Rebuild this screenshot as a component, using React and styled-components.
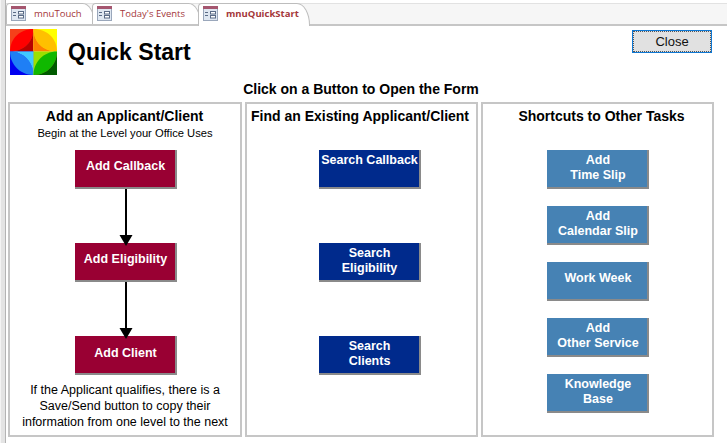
import styled, { createGlobalStyle } from "styled-components";

const GlobalStyle = createGlobalStyle`
  html, body {
    margin: 0;
    padding: 0;
    background: #fff;
  }
  body {
    font-family: "Liberation Sans", Arial, sans-serif;
    overflow: hidden;
  }
`;

const Page = styled.div`
  width: 727px;
  height: 443px;
  display: flex;
  overflow: hidden;
  background: #fff;
`;

const LeftEdge = styled.div`
  width: 6px;
  flex: none;
  box-sizing: border-box;
  background: #e4e4e4;
  border-left: 1px solid #f4f4f4;
  border-right: 1px solid #b4b4b4;
`;

const Main = styled.div`
  flex: 1;
  min-width: 0;
  display: flex;
  flex-direction: column;
`;

const TabStrip = styled.div`
  height: 23px;
  margin-top: 3px;
  box-sizing: border-box;
  display: flex;
  align-items: flex-end;
  background: #f6f6f6;
  border-top: 1px solid #e2e2e2;
  border-bottom: 2px solid #c6c6c6;
`;

const Tab = styled.div`
  position: relative;
  z-index: ${(p) => (p.$active ? 2 : 1)};
  height: ${(p) => (p.$active ? 23 : 21)}px;
  width: ${(p) => p.$width}px;
  margin-right: -3px;
  margin-bottom: ${(p) => (p.$active ? -2 : 0)}px;
  box-sizing: border-box;
  display: flex;
  align-items: center;
  gap: 8px;
  padding: 0 0 ${(p) => (p.$active ? 3 : 1)}px 4px;
  background: #fff;
  border: 1px solid #bdbdbd;
  border-bottom: none;
  border-radius: 4px 13px 0 0 / 4px 22px 0 0;
  font-family: "Open Sans", sans-serif;
  font-size: 9.5px;
  font-weight: ${(p) => (p.$active ? 700 : 400)};
  color: #a4373a;
  white-space: nowrap;
`;

const Header = styled.div`
  height: 52px;
  display: flex;
  align-items: center;
  padding-left: 4px;
`;

const Title = styled.h1`
  margin: 0 0 0 11px;
  font-size: 23px;
  font-weight: 700;
  color: #000;
`;

const CloseButton = styled.button`
  margin-left: auto;
  margin-right: 15px;
  margin-bottom: 22px;
  width: 80px;
  height: 23px;
  padding: 0;
  box-sizing: border-box;
  background: #e1e1e1;
  border: 1px solid #0f78d4;
  outline: 1px dotted #555;
  outline-offset: -2px;
  font-family: inherit;
  font-size: 13px;
  color: #111;
`;

const Instruction = styled.div`
  height: 24px;
  line-height: 22px;
  text-align: center;
  font-size: 14px;
  font-weight: 700;
  color: #000;
  padding-right: 11px;
`;

const Panels = styled.div`
  display: grid;
  grid-template-columns: 234px 233px 233px;
  gap: 3px;
  margin-left: 2px;
`;

const Panel = styled.section`
  height: 335px;
  box-sizing: border-box;
  border: 2px solid #c6c6c6;
  display: flex;
  flex-direction: column;
  align-items: center;
  padding-top: 4px;
`;

const PanelTitle = styled.div`
  font-size: 14px;
  font-weight: 700;
  line-height: 16px;
  color: #000;
  margin-left: ${(p) => p.$shift || 0}px;
`;

const Subtitle = styled.div`
  font-size: 11.2px;
  line-height: 14px;
  margin-top: 2px;
  color: #000;
`;

const ButtonColumn = styled.div`
  display: flex;
  flex-direction: column;
  align-items: center;
  gap: ${(p) => p.$gap}px;
  margin-top: ${(p) => p.$top}px;
  margin-left: ${(p) => p.$shift || 0}px;
`;

const ActionButton = styled.button`
  width: 102px;
  height: 39px;
  padding: 0 0 ${(p) => p.$lift ?? 1}px 2px;
  box-sizing: border-box;
  background: ${(p) => p.$color};
  border: none;
  border-right: 2px solid #8a8a8a;
  border-bottom: 2px solid #8a8a8a;
  color: #fff;
  font-family: inherit;
  font-size: 12.5px;
  font-weight: 700;
  line-height: 15px;
  white-space: pre-line;
`;

const ArrowWrap = styled.svg`
  display: block;
  position: relative;
  z-index: 1;
  width: 14px;
  height: 54px;
  overflow: visible;
`;

const Note = styled.div`
  margin-top: 7px;
  font-size: 12.5px;
  line-height: 16px;
  text-align: center;
  color: #000;
`;

const FormIcon = () => (
  <svg width="15" height="15" viewBox="0 0 15 15" style={{ flex: "none" }}>
    <rect x="0.5" y="0.5" width="14" height="14" fill="#dfe7f1" stroke="#9aa7bb" />
    <rect x="0" y="0" width="15" height="3" fill="#a5566f" />
    <path d="M2 6.5h3M2 9.5h3" stroke="#5a6b85" />
    <rect x="7.5" y="5.5" width="5" height="2.5" fill="#fff" stroke="#5a6b85" />
    <rect x="7.5" y="9.5" width="5" height="2.5" fill="#fff" stroke="#5a6b85" />
  </svg>
);

const Logo = () => (
  <svg width="47" height="46" viewBox="0 0 48 47" style={{ flex: "none" }}>
    <rect width="24" height="23" fill="#f5401a" />
    <path d="M0 23C0 10 10 0 24 0C24 13 14 23 0 23z" fill="#ff0000" />
    <path d="M24 0C24 13 14 23 0 23H24z" fill="#b80000" />
    <rect x="24" width="24" height="23" fill="#ffff00" />
    <path d="M24 0C38 0 48 10 48 23C34 23 24 13 24 0z" fill="#ffc000" />
    <path d="M24 0C24 13 34 23 48 23H24z" fill="#ff8000" />
    <rect y="23" width="24" height="24" fill="#0000f0" />
    <path d="M0 23C14 23 24 34 24 47C10 47 0 36 0 23z" fill="#1f7ff5" />
    <path d="M0 23C14 23 24 34 24 47V23z" fill="#40c8ff" />
    <rect x="24" y="23" width="24" height="24" fill="#9be000" />
    <path d="M24 47C24 34 34 23 48 23C48 36 38 47 24 47z" fill="#10b800" />
    <path d="M48 23C48 36 38 47 24 47H48z" fill="#005a00" />
  </svg>
);

const Arrow = () => (
  <ArrowWrap viewBox="0 0 14 54">
    <line x1="7" y1="0" x2="7" y2="48" stroke="#000" strokeWidth="2" />
    <polygon points="0.5,46 13.5,46 7,57" fill="#000" />
  </ArrowWrap>
);

const RED = "#990033";
const NAVY = "#002a8c";
const BLUE = "#4682b4";

const otherTasks = [
  { label: "Add\nTime Slip" },
  { label: "Add\nCalendar Slip" },
  { label: "Work Week", lift: 5 },
  { label: "Add\nOther Service" },
  { label: "Knowledge\nBase" },
];

export default function App() {
  return (
    <Page>
      <GlobalStyle />
      <LeftEdge />
      <Main>
        <TabStrip>
          <Tab $width={89}>
            <FormIcon />
            mnuTouch
          </Tab>
          <Tab $width={109}>
            <FormIcon />
            Today's Events
          </Tab>
          <Tab $active $width={112}>
            <FormIcon />
            mnuQuickStart
          </Tab>
        </TabStrip>
        <Header>
          <Logo />
          <Title>Quick Start</Title>
          <CloseButton>Close</CloseButton>
        </Header>
        <Instruction>Click on a Button to Open the Form</Instruction>
        <Panels>
          <Panel>
            <PanelTitle $shift={-1}>Add an Applicant/Client</PanelTitle>
            <Subtitle>Begin at the Level your Office Uses</Subtitle>
            <ButtonColumn $gap={0} $top={10} $shift={1}>
              <ActionButton $color={RED} $lift={5}>
                Add Callback
              </ActionButton>
              <Arrow />
              <ActionButton $color={RED} $lift={5}>
                Add Eligibility
              </ActionButton>
              <Arrow />
              <ActionButton $color={RED} $lift={3}>
                Add Client
              </ActionButton>
            </ButtonColumn>
            <Note>
              If the Applicant qualifies, there is a
              <br />
              Save/Send button to copy their
              <br />
              information from one level to the next
            </Note>
          </Panel>
          <Panel>
            <PanelTitle $shift={-3}>Find an Existing Applicant/Client</PanelTitle>
            <ButtonColumn $gap={54} $top={26} $shift={16}>
              <ActionButton $color={NAVY} $lift={17}>
                Search Callback
              </ActionButton>
              <ActionButton $color={NAVY}>{"Search\nEligibility"}</ActionButton>
              <ActionButton $color={NAVY}>{"Search\nClients"}</ActionButton>
            </ButtonColumn>
          </Panel>
          <Panel>
            <PanelTitle $shift={8}>Shortcuts to Other Tasks</PanelTitle>
            <ButtonColumn $gap={17} $top={26} $shift={1}>
              {otherTasks.map((task) => (
                <ActionButton key={task.label} $color={BLUE} $lift={task.lift}>
                  {task.label}
                </ActionButton>
              ))}
            </ButtonColumn>
          </Panel>
        </Panels>
      </Main>
    </Page>
  );
}
